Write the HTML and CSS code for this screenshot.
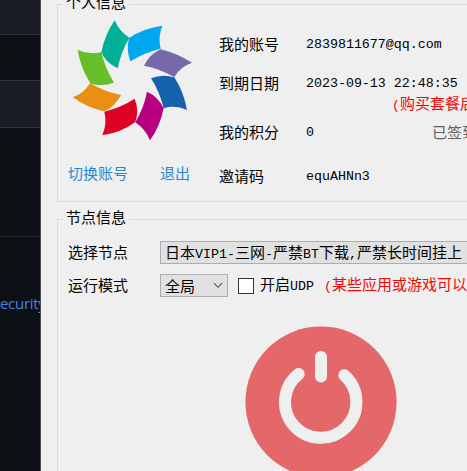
FILE: index.html
```html
<!DOCTYPE html>
<html lang="zh-CN">
<head>
<meta charset="utf-8">
<title>节点信息</title>
<link rel="stylesheet" href="styles.css">
</head>
<body>
<div class="desktop">
  <aside class="backdrop">
    <div class="band band-top"></div>
    <div class="band band-gap"></div>
    <div class="band band-mid"></div>
    <div class="band band-low"></div>
    <div class="band-link">ecurity</div>
  </aside>
  <main class="window">
    <section class="group profile">
      <h2 class="legend">个人信息</h2>
      <div class="account">
        <svg class="logo" viewBox="0 0 390 390">
          <path fill="#00b096" d="M149 16Q163 50 193 68Q169 108 158 160Q123 144 109 112Q120 58 149 16Z"/>
          <path fill="#00a6f0" d="M292 32Q278 66 287 101Q237 113 196 139Q183 104 192 69Q236 39 292 32Z"/>
          <path fill="#7869ab" d="M381 143Q345 155 328 186Q284 161 237 152Q253 118 287 103Q338 116 381 143Z"/>
          <path fill="#1762ad" d="M366 285Q330 269 296 280Q284 230 258 190Q292 176 328 187Q356 230 366 285Z"/>
          <path fill="#b70080" d="M255 376Q241 342 211 322Q237 278 246 230Q280 245 296 280Q285 335 255 376Z"/>
          <path fill="#df0026" d="M112 361Q127 325 118 290Q167 278 209 251Q223 287 211 321Q168 353 112 361Z"/>
          <path fill="#e98f13" d="M23 247Q57 235 75 205Q120 231 168 240Q151 275 117 289Q66 278 23 247Z"/>
          <path fill="#65be2a" d="M38 105Q74 121 109 111Q120 160 147 203Q112 216 77 206Q47 160 38 105Z"/>
        </svg>
        <nav class="links"><a>切换账号</a><a>退出</a></nav>
      </div>
      <div class="details">
        <span>我的账号</span><span class="ascii value">2839811677@qq.com</span>
        <span>到期日期</span><span class="ascii value">2023-09-13 22:48:35</span>
        <span class="renew"><span class="ascii">(</span>购买套餐后</span>
        <span>我的积分</span><span class="points"><span class="ascii value">0</span><span class="signed">已签到</span></span>
        <span>邀请码</span><span class="ascii value">equAHNn3</span>
      </div>
    </section>
    <section class="group nodes">
      <h2 class="legend">节点信息</h2>
      <div class="field">
        <span class="label">选择节点</span>
        <div class="select select-node">日本<span class="ascii">VIP1-</span>三网<span class="ascii">-</span>严禁<span class="ascii">BT</span>下载<span class="ascii">,</span>严禁长时间挂上</div>
      </div>
      <div class="field">
        <span class="label">运行模式</span>
        <div class="select select-mode">全局<svg class="chevron" viewBox="0 0 11 7"><path d="M1 1L5.500 5.500L10 1"/></svg></div>
        <span class="checkbox"></span>
        <span class="udp">开启<span class="ascii">UDP</span></span>
        <span class="hint"><span class="ascii">(</span>某些应用或游戏可以</span>
      </div>
      <svg class="power" viewBox="0 0 152 152">
        <circle cx="76" cy="76" r="75.600"/>
        <path d="M76 31V50.500M53.700 48A35.700 35.700 0 1 0 99.300 49.300"/>
      </svg>
    </section>
  </main>
</div>
</body>
</html>
```
FILE: styles.css
```css
* { box-sizing: border-box; }
body {
  margin: 0;
  width: 467px;
  height: 471px;
  overflow: hidden;
  background: #efefef;
  color: #000;
  font: 15px/20px "Noto Sans CJK SC", sans-serif;
  white-space: nowrap;
}
.desktop { display: flex; height: 471px; }
.backdrop {
  flex: none;
  width: 41px;
  overflow: hidden;
  background: #0d1014;
  border-right: 1px solid #4b4c4e;
}
.band { border-bottom: 1px solid #30343a; }
.band-top { height: 35px; background: #191c24; }
.band-gap { height: 46px; }
.band-mid { height: 47px; background: #191c24; }
.band-low { height: 109px; border-color: #25282c; }
.band-link {
  padding-top: 56px;
  color: #4483e6;
  font: 15px/20px "Open Sans", sans-serif;
  letter-spacing: -0.3px;
}
.window { flex: none; width: 426px; padding: 4px 0 0 16px; }
.group {
  position: relative;
  width: 430px;
  border: 1px solid #dcdcdc;
}
.legend {
  position: absolute;
  left: 5px;
  top: -13px;
  margin: 0;
  padding: 0 3px;
  background: #efefef;
  font-size: 15px;
  font-weight: 400;
}
.ascii { font: 13.3px/20px "Liberation Mono", monospace; }
.value { padding-top: 2px; }
.profile { display: flex; height: 198px; margin-bottom: 17px; }
.account { width: 161px; padding: 10px 0 0 7px; }
.logo { display: block; width: 130px; height: 130px; }
.links {
  display: flex;
  gap: 32px;
  padding: 18px 0 0 3px;
  color: #2488d8;
}
.details {
  display: grid;
  grid-template-columns: 87px 1fr;
  grid-template-rows: 39px 39px 11px 37px 51px;
  align-items: center;
  align-content: start;
  padding-top: 19px;
}
.renew {
  grid-column: 1 / 3;
  align-self: start;
  margin-top: -9px;
  padding-left: 173px;
  height: 20px;
  color: #f00808;
}
.points { display: flex; align-items: center; }
.signed { margin-left: 118px; color: #606060; }
.nodes { height: 270px; padding: 20px 0 0 10px; }
.field { display: flex; align-items: center; height: 24px; margin-bottom: 9px; }
.label { flex: none; width: 92px; }
.select {
  flex: none;
  height: 23px;
  padding: 0 4px;
  line-height: 19px;
  background: #e1e1e1;
  border: 1px solid #adadad;
}
.select-node { width: 330px; }
.select-mode { display: flex; align-items: center; width: 68px; }
.chevron { width: 11px; height: 7px; margin-left: 18px; }
.chevron path { fill: none; stroke: #505050; stroke-width: 1.2; }
.checkbox {
  flex: none;
  width: 16px;
  height: 16px;
  margin: 2px 0 0 10px;
  background: #fff;
  border: 1px solid #333;
}
.udp { margin-left: 6px; }
.hint { margin-left: 10px; color: #f00808; }
.power {
  display: block;
  width: 152px;
  height: 152px;
  margin: 20px 0 0 177px;
  position: relative;
  top: 9px;
}
.power circle { fill: #e4686a; }
.power path {
  fill: none;
  stroke: #edf0ef;
  stroke-width: 12;
  stroke-linecap: round;
}
```
